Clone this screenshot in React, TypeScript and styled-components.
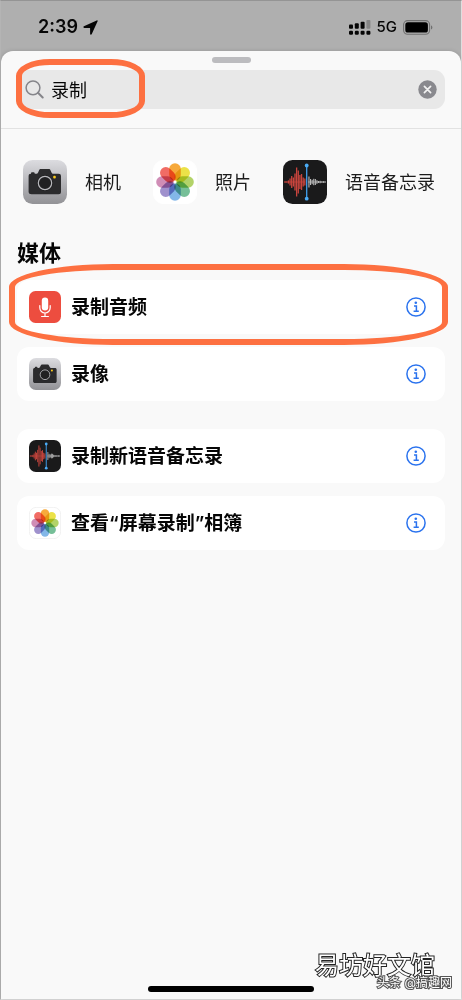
import React from 'react';
import styled, { createGlobalStyle } from 'styled-components';

const GlobalStyle = createGlobalStyle`
  *, *::before, *::after { box-sizing: border-box; }
  body {
    margin: 0;
    background: #afafaf;
    color: #060606;
    font-family: Inter, 'Noto Sans CJK SC', sans-serif;
  }
  button, input { font: inherit; color: inherit; }
`;

const Screen = styled.div`
  position: relative;
  display: flex;
  flex-direction: column;
  min-height: 100vh;
  border: 1px solid #dedede;
  border-top-color: #949494;
  border-left-color: #b4b4b4;
`;

const StatusBar = styled.header`
  display: flex;
  align-items: center;
  justify-content: space-between;
  height: 50px;
  padding: 2px 28px 0 37px;
`;

const StatusGroup = styled.div<{ $gap: number }>`
  display: flex;
  align-items: center;
  gap: ${(p) => p.$gap}px;
`;

const Clock = styled.time`
  font-size: 18px;
  font-weight: 600;
  line-height: 24px;
`;

const Network = styled.span`
  font-size: 15px;
  font-weight: 500;
  line-height: 24px;
`;

const Sheet = styled.main`
  flex: 1;
  display: flex;
  flex-direction: column;
  background: #f9f9f9;
  border-radius: 12px 12px 0 0;
  box-shadow: 0 0 4px rgba(0, 0, 0, 0.14);
`;

const Grabber = styled.div`
  width: 39px;
  height: 6px;
  margin: 6px auto 7px;
  border-radius: 3px;
  background: #bcbcbf;
`;

const SearchArea = styled.div`
  padding: 0 16px 19px;
  border-bottom: 1px solid #e2e2e2;
`;

const SearchForm = styled.form`
  position: relative;
  display: flex;
  align-items: center;
  gap: 7px;
  height: 39px;
  padding: 0 8px;
  border-radius: 11px;
  background: #e8e8e8;
`;

const SearchInput = styled.input`
  flex: 1;
  min-width: 0;
  padding: 2px 0 0;
  border: 0;
  outline: 0;
  background: none;
  font-size: 18px;
  line-height: 28px;
`;

const IconButton = styled.button`
  display: flex;
  flex: none;
  padding: 0;
  border: 0;
  background: none;
  cursor: pointer;
`;

const SearchMark = styled.span`
  position: absolute;
  top: -11px;
  bottom: -9px;
  left: -1px;
  width: 129px;
  border: 6px solid #fd7041;
  border-radius: 34px / 17px;
  pointer-events: none;
`;

const RowMark = styled.span`
  position: absolute;
  inset: -16px -3px -11px -8px;
  border: 6px solid #fd7041;
  border-radius: 104px / 23px;
  pointer-events: none;
`;

const Apps = styled.nav`
  display: flex;
  gap: 32px;
  padding: 31px 22px 0;
`;

const AppLink = styled.a`
  display: flex;
  align-items: center;
  gap: 18px;
  color: #1c1c1c;
  font-size: 18px;
  line-height: 28px;
  white-space: nowrap;
  text-decoration: none;
`;

const Label = styled.span`
  padding-top: 2px;
`;

const Heading = styled.h1`
  margin: 33px 16px 11px;
  font-size: 22px;
  font-weight: 700;
  line-height: 32px;
`;

const List = styled.ul`
  display: flex;
  flex-direction: column;
  gap: 13px;
  margin: 0 16px 28px;
  padding: 0;
  list-style: none;
`;

const Card = styled.li`
  position: relative;
  display: flex;
  align-items: center;
  height: 54px;
  padding: 0 19px 0 12px;
  border-radius: 12px;
  background: #fff;
`;

const Action = styled.button`
  display: flex;
  flex: 1;
  align-items: center;
  gap: 10px;
  padding: 0;
  border: 0;
  background: none;
  font-size: 19px;
  font-weight: 600;
  line-height: 28px;
  text-align: left;
  cursor: pointer;
`;

const Footer = styled.footer`
  display: flex;
  justify-content: center;
  margin-top: auto;
  padding-bottom: 7px;
`;

const HomeIndicator = styled.div`
  width: 36%;
  height: 6px;
  border-radius: 3px;
  background: #000;
`;

const Watermark = styled.div`
  position: absolute;
  right: 9px;
  bottom: 6px;
  display: flex;
  flex-direction: column;
  align-items: flex-end;
  color: #fff;
  paint-order: stroke fill;
  white-space: nowrap;
  pointer-events: none;
`;

const SiteName = styled.span`
  margin: 0 17px -9px 0;
  font-size: 24px;
  line-height: 32px;
  -webkit-text-stroke: 2px #222;
`;

const Author = styled.span`
  font-size: 12px;
  line-height: 20px;
  -webkit-text-stroke: 2px #555;
`;

type IconProps = { size: number };

const petals = ['#f59a17', '#e8dc25', '#a5cb4c', '#5cb384', '#6ba9e4', '#8d7cc4', '#c777a8', '#ee5047'];

const PhotosIcon = ({ size }: IconProps) => (
  <svg width={size} height={size} viewBox="0 0 44 44" aria-hidden="true">
    <rect x="0.5" y="0.5" width="43" height="43" rx="9.5" fill="#fff" stroke={size < 40 ? '#ececec' : '#fff'} />
    <g style={{ isolation: 'isolate' }}>
      {petals.map((color, i) => (
        <rect
          key={color}
          x="16.2"
          y="3.2"
          width="11.6"
          height="17.4"
          rx="5.8"
          fill={color}
          fillOpacity="0.84"
          transform={`rotate(${i * 45} 22 22)`}
          style={{ mixBlendMode: 'multiply' }}
        />
      ))}
    </g>
  </svg>
);

const CameraIcon = ({ size }: IconProps) => {
  const id = `camera-${size}`;
  return (
    <svg width={size} height={size} viewBox="0 0 44 44" aria-hidden="true">
      <defs>
        <linearGradient id={id} x1="0" y1="0" x2="0" y2="1">
          <stop offset="0" stopColor="#dcdce0" />
          <stop offset="1" stopColor="#929296" />
        </linearGradient>
      </defs>
      <rect width="44" height="44" rx="9.5" fill={`url(#${id})`} />
      <rect x="8" y="12.2" width="3.6" height="3" rx="1" fill="#2b2b2d" />
      <path
        d="M8 13.8h5.2c1 0 1.5-.5 1.9-1.3l.9-2c.4-1 1-1.4 2-1.4h7.6c1 0 1.6.4 2 1.4l.9 2c.4.8.9 1.3 1.900 1.300H35.500c1.700 0 2.500.8 2.500 2.500v15.500c0 1.700-.8 2.500-2.500 2.500h-27c-1.700 0-2.900-.8-2.900-2.500V16.300c0-1.700.7-2.500 2.400-2.500z"
        fill="#2b2b2d"
      />
      <circle cx="22" cy="23" r="8" fill="#202022" />
      <circle cx="22" cy="23" r="6.7" fill="none" stroke="#b9b9bd" strokeWidth="1.2" />
      <rect x="30.2" y="15.8" width="2.6" height="2.6" rx="1" fill="#fdcb1b" />
    </svg>
  );
};

const redBars = [0.6, 0.6, 1.6, 3.5, 6, 4.5, 8.5, 14.5, 11.5, 7, 8, 4.5, 3.5];
const greyBars = [5.5, 3, 2.2, 3.2, 3, 1.8, 1, 1.2, 0.6, 0.9, 0.5];

const MemosIcon = ({ size }: IconProps) => (
  <svg width={size} height={size} viewBox="0 0 44 44" aria-hidden="true">
    <rect width="44" height="44" rx="9.5" fill="#1a1a1b" />
    <path d="M1 22h21" stroke="#b8423b" strokeWidth="0.8" />
    <path d="M25 22h18" stroke="#aaa" strokeWidth="0.8" />
    {redBars.map((h, i) => (
      <rect key={i} x={1.5 + i * 1.64} y={22 - h} width="1.3" height={h * 2} fill="#c9453d" />
    ))}
    {greyBars.map((h, i) => (
      <rect key={i} x={25.4 + i * 1.6} y={22 - h} width="1.1" height={h * 2} fill="#b9b9b9" />
    ))}
    <path d="M23.7 5.5v33" stroke="#3fa0ee" strokeWidth="1.3" />
    <circle cx="23.7" cy="5.5" r="1.9" fill="#4bacf5" />
    <circle cx="23.7" cy="38.7" r="1.9" fill="#4bacf5" />
  </svg>
);

const MicIcon = ({ size }: IconProps) => (
  <svg width={size} height={size} viewBox="0 0 32 32" aria-hidden="true">
    <rect width="32" height="32" rx="6.5" fill="#ed4d3f" />
    <rect x="12.8" y="6.5" width="6.4" height="13" rx="3.2" fill="#fff" />
    <path
      d="M10.8 14.5v2.3a5.2 5.2 0 0 0 10.4 0v-2.3M16 22v3.4M12.6 25.5h6.8"
      fill="none"
      stroke="#fff"
      strokeWidth="1.2"
      strokeLinecap="round"
    />
  </svg>
);

const InfoIcon = () => (
  <svg width="20" height="20" viewBox="0 0 20 20" aria-hidden="true">
    <circle cx="10" cy="10" r="9.1" fill="none" stroke="#2b73ee" strokeWidth="1.5" />
    <circle cx="9.8" cy="5.7" r="1.3" fill="#2b73ee" />
    <path d="M8 8.9h2.4v5.2M7.6 14.2h5.2" fill="none" stroke="#2b73ee" strokeWidth="1.5" />
  </svg>
);

const SearchIcon = () => (
  <svg width="19" height="19" viewBox="0 0 19 19" aria-hidden="true">
    <circle cx="8" cy="7.8" r="6.9" fill="none" stroke="#85858a" strokeWidth="1.5" />
    <path d="M13 12.8l4.7 4.7" stroke="#85858a" strokeWidth="2" strokeLinecap="round" />
  </svg>
);

const ClearIcon = () => (
  <svg width="19" height="19" viewBox="0 0 19 19" aria-hidden="true">
    <circle cx="9.5" cy="9.5" r="9.2" fill="#89898e" />
    <path d="M6.4 6.4l6.2 6.2M12.6 6.4l-6.2 6.2" stroke="#f2f2f2" strokeWidth="1.7" strokeLinecap="round" />
  </svg>
);

const LocationIcon = () => (
  <svg width="15" height="15" viewBox="0 0 15 15" aria-hidden="true">
    <path
      d="M13.7.4L.9 6.2c-1 .5-.7 1.700.4 1.700h5.500c.2 0 .3.1.3.3v5.500c0 1.100 1.200 1.300 1.700.3L14.600 1.300c.3-.7-.2-1.200-.9-.9z"
      fill="#050505"
    />
  </svg>
);

const signal = [
  { top: 4.5, color: '#050505' },
  { top: 3.2, color: '#050505' },
  { top: 1.8, color: '#050505' },
  { top: 0, color: '#858585' },
];

const SignalIcon = () => (
  <svg width="22" height="15" viewBox="0 0 22 15" aria-hidden="true">
    {signal.map((bar, i) => (
      <g key={i}>
        <rect x={i * 5.8} y={bar.top} width="4" height={8.8 - bar.top} rx="1" fill={bar.color} />
        <rect x={i * 5.8} y="10.8" width="4" height="4" rx="1.2" fill="#050505" />
      </g>
    ))}
  </svg>
);

const BatteryIcon = () => (
  <svg width="30" height="15" viewBox="0 0 30 15" aria-hidden="true">
    <rect x="0.6" y="0.6" width="26" height="13.6" rx="4" fill="none" stroke="#707070" strokeWidth="1.1" />
    <rect x="2.3" y="2.3" width="22.6" height="10.2" rx="2.6" fill="#000" />
    <path d="M28 5.2v4.4c1.9-.8 1.9-3.6 0-4.4z" fill="#707070" />
  </svg>
);

type Item = { title: string; Icon: React.ComponentType<IconProps>; marked?: boolean };

const apps: Item[] = [
  { title: '相机', Icon: CameraIcon },
  { title: '照片', Icon: PhotosIcon },
  { title: '语音备忘录', Icon: MemosIcon },
];

const groups: Item[][] = [
  [
    { title: '录制音频', Icon: MicIcon, marked: true },
    { title: '录像', Icon: CameraIcon },
  ],
  [
    { title: '录制新语音备忘录', Icon: MemosIcon },
    { title: '查看“屏幕录制”相簿', Icon: PhotosIcon },
  ],
];

export default function App() {
  return (
    <Screen lang="zh-CN">
      <GlobalStyle />
      <StatusBar>
        <StatusGroup $gap={5}>
          <Clock>2:39</Clock>
          <LocationIcon />
        </StatusGroup>
        <StatusGroup $gap={6}>
          <SignalIcon />
          <Network>5G</Network>
          <BatteryIcon />
        </StatusGroup>
      </StatusBar>
      <Sheet>
        <Grabber />
        <SearchArea>
          <SearchForm role="search" onSubmit={(e) => e.preventDefault()}>
            <SearchIcon />
            <SearchInput type="text" aria-label="搜索" defaultValue="录制" />
            <IconButton type="reset" aria-label="清除">
              <ClearIcon />
            </IconButton>
            <SearchMark />
          </SearchForm>
        </SearchArea>
        <Apps>
          {apps.map(({ title, Icon }) => (
            <AppLink href="#" key={title}>
              <Icon size={44} />
              <Label>{title}</Label>
            </AppLink>
          ))}
        </Apps>
        <Heading>媒体</Heading>
        {groups.map((items, i) => (
          <List key={i}>
            {items.map(({ title, Icon, marked }) => (
              <Card key={title}>
                <Action type="button">
                  <Icon size={32} />
                  <Label>{title}</Label>
                </Action>
                <IconButton type="button" aria-label={`${title} 详情`}>
                  <InfoIcon />
                </IconButton>
                {marked && <RowMark />}
              </Card>
            ))}
          </List>
        ))}
        <Footer>
          <HomeIndicator />
        </Footer>
      </Sheet>
      <Watermark>
        <SiteName>易坊好文馆</SiteName>
        <Author>头条 @搞趣网</Author>
      </Watermark>
    </Screen>
  );
}
